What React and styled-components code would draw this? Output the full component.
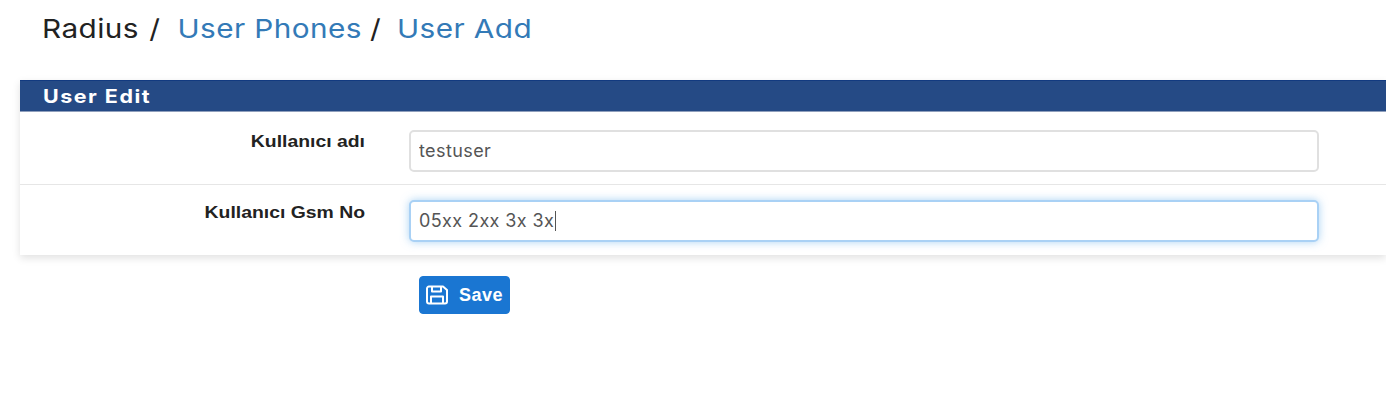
import React from 'react';
import styled, { createGlobalStyle } from 'styled-components';

const GlobalStyle = createGlobalStyle`
  html, body { margin: 0; padding: 0; background: #fff; overflow: hidden; }
  body { font-family: Inter, "Liberation Sans", sans-serif; }
`;

const Page = styled.div`
  width: 1386px;
  height: 417px;
  padding-left: 20px;
  box-sizing: border-box;
  overflow: hidden;
`;

// the screenshot is stretched sideways, so the text gets a scaleX too
const Crumbs = styled.div`
  height: 56px;
  padding-left: 22px;
  display: flex;
  align-items: center;
  font-size: 26px;
  letter-spacing: 0.35px;
  color: #222;
  white-space: pre;
  margin-bottom: 24px;
  transform: scaleX(1.145);
  transform-origin: 22px 50%;
`;

const CrumbLink = styled.a`
  color: #337ab7;
  text-decoration: none;
  margin-left: ${(p) => p.$gap}px;
`;

const Slash = styled.span`
  margin-left: ${(p) => p.$gap}px;
`;

const Panel = styled.div`
  width: 1366px;
  background: #fff;
  box-shadow: 0 3px 8px rgba(0, 0, 0, 0.12);
`;

const PanelHeader = styled.div`
  height: 32px;
  box-sizing: border-box;
  padding: 0 0 1px 23px;
  display: flex;
  align-items: center;
  background: #254a85;
  border-top: 1px solid #123a80;
  border-bottom: 1px solid #8f9fbc;
  color: #fff;
`;

const PanelTitle = styled.span`
  font-size: 18.5px;
  font-weight: 700;
  letter-spacing: 1.3px;
  transform: scaleX(1.16);
  transform-origin: left center;
`;

const Row = styled.div`
  display: grid;
  grid-template-columns: 345px 910px;
  column-gap: 44px;
  height: ${(p) => p.$height}px;
  box-sizing: border-box;
  padding-top: ${(p) => p.$top}px;
  border-bottom: ${(p) => (p.$last ? 'none' : '1px solid #e6e6e6')};
`;

const Label = styled.label`
  padding-top: ${(p) => p.$drop}px;
  text-align: right;
  font-family: "Liberation Sans", Arial, sans-serif;
  font-size: 17px;
  font-weight: 700;
  line-height: 22px;
  color: #222;
  transform: scaleX(1.14);
  transform-origin: right center;
`;

const FieldWrap = styled.div`
  position: relative;
  height: 42px;
`;

const Field = styled.input`
  width: 100%;
  height: 42px;
  box-sizing: border-box;
  padding: 0 8px 1px;
  background: #fff;
  border: 2px solid ${(p) => (p.$focus ? '#a9d1f5' : '#e0e0e0')};
  border-radius: 5px;
  box-shadow: ${(p) => (p.$focus ? '0 0 8px rgba(102, 175, 233, 0.55)' : 'none')};
  outline: none;
  font-family: Inter, "Liberation Sans", sans-serif;
  font-size: 18px;
  letter-spacing: 0.4px;
  color: #555;
`;

const Caret = styled.span`
  position: absolute;
  left: 146px;
  top: 11px;
  width: 1px;
  height: 20px;
  background: #555;
`;

const Actions = styled.div`
  padding: 21px 0 0 399px;
`;

const SaveButton = styled.button`
  width: 91px;
  height: 38px;
  display: flex;
  align-items: center;
  gap: 10px;
  padding: 0 0 0 5px;
  box-sizing: border-box;
  border: 1px solid #1a76d2;
  border-radius: 4px;
  background: #1a76d2;
  color: #fff;
  font-family: "Liberation Sans", Arial, sans-serif;
  font-size: 18px;
  font-weight: 700;
  letter-spacing: 0.5px;
`;

const SaveIcon = () => (
  <svg width="24" height="20" viewBox="0 0 24 20" fill="none" stroke="#fff" strokeWidth="2" strokeLinejoin="round">
    <path d="M2 3.500a2 2 0 0 1 2-2h14l4 3.500v11.500a2 2 0 0 1-2 2h-16a2 2 0 0 1-2-2z" />
    <path d="M7 1.500v5h9v-5" />
    <path d="M6 18v-6.500h12v6.500" />
  </svg>
);

const App = () => (
  <>
    <GlobalStyle />
    <Page>
      <Crumbs>
        Radius
        <Slash $gap={9}>/</Slash>
        <CrumbLink href="#" $gap={15}>User Phones</CrumbLink>
        <Slash $gap={7}>/</Slash>
        <CrumbLink href="#" $gap={14}>User Add</CrumbLink>
      </Crumbs>
      <Panel>
        <PanelHeader>
          <PanelTitle>User Edit</PanelTitle>
        </PanelHeader>
        <Row $height={73} $top={18}>
          <Label $drop={1}>Kullanıcı adı</Label>
          <FieldWrap>
            <Field readOnly value="testuser" />
          </FieldWrap>
        </Row>
        <Row $height={70} $top={15} $last>
          <Label $drop={2}>Kullanıcı Gsm No</Label>
          <FieldWrap>
            <Field readOnly $focus value="05xx 2xx 3x 3x" />
            <Caret />
          </FieldWrap>
        </Row>
      </Panel>
      <Actions>
        <SaveButton>
          <SaveIcon />
          Save
        </SaveButton>
      </Actions>
    </Page>
  </>
);

export default App;
